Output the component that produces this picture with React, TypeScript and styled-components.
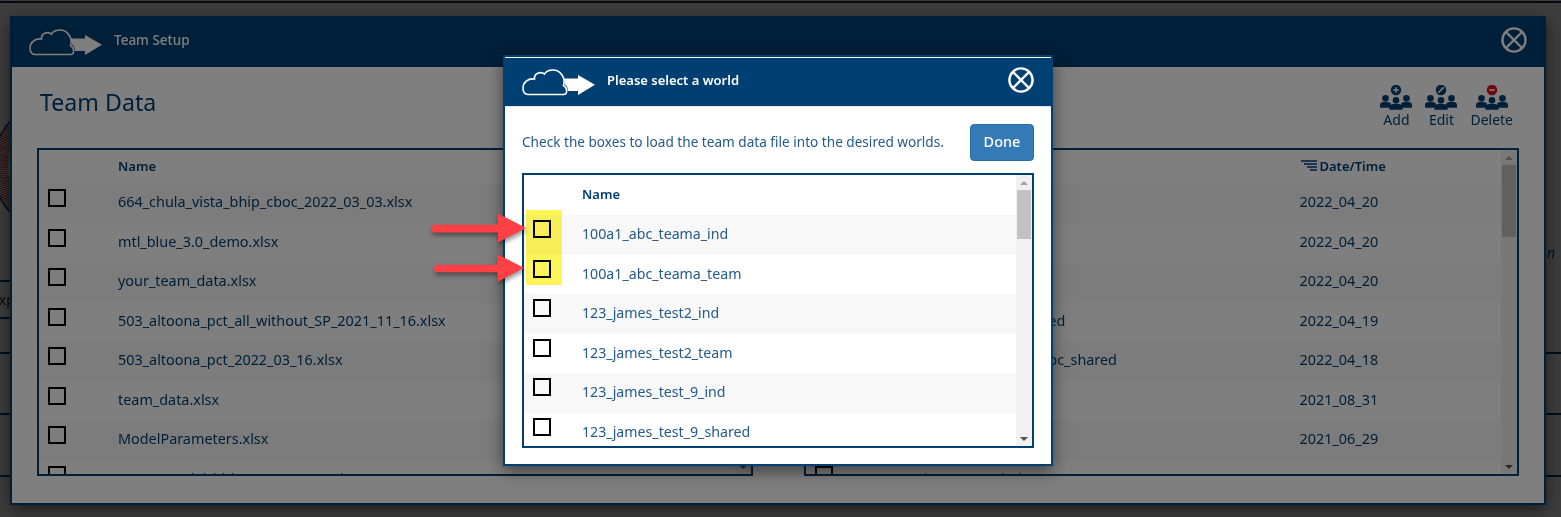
import React from 'react'
import styled, { createGlobalStyle } from 'styled-components'

const NAVY = '#003f72'
const FONT = '"Noto Sans", "Open Sans", Arial, sans-serif'

const teamRows = [
  { name: '664_chula_vista_bhip_cboc_2022_03_03.xlsx', date: '2022_04_20' },
  { name: 'mtl_blue_3.0_demo.xlsx', date: '2022_04_20' },
  { name: 'your_team_data.xlsx', date: '2022_04_20' },
  { name: '503_altoona_pct_all_without_SP_2021_11_16.xlsx', date: '2022_04_19' },
  { name: '503_altoona_pct_2022_03_16.xlsx', date: '2022_04_18' },
  { name: 'team_data.xlsx', date: '2021_08_31' },
  { name: 'ModelParameters.xlsx', date: '2021_06_29' },
  { name: '649_0_model_bhip_2022_03_24.xlsx', date: '2022_03_15' },
]

const rightRows = [
  { name: '', date: '2022_04_20' },
  { name: '', date: '2022_04_20' },
  { name: '', date: '2022_04_20' },
  { name: '503_altoona_pct_al_shared', date: '2022_04_19' },
  { name: '664_chula_vista_bhip_cboc_shared', date: '2022_04_18' },
  { name: '', date: '2021_08_31' },
  { name: '', date: '2021_06_29' },
  { name: '503_altoona_pct_ind', date: '2021_04_20' },
]

const worlds = [
  '100a1_abc_teama_ind',
  '100a1_abc_teama_team',
  '123_james_test2_ind',
  '123_james_test2_team',
  '123_james_test_9_ind',
  '123_james_test_9_shared',
]

const Logo = () => (
  <LogoSvg viewBox="0 0 74 27">
    <path
      d="M6 25.5H41.5C45.5 25.5 46 19 41.5 16.5C44 8.5 38 1 31 1C27 1 24 2.5 22.5 5C18.5 2 12 4.5 12.5 10C6 9 1 13.5 1 19C1 23 3 25.5 6 25.5Z"
      fill="none"
      stroke="currentColor"
      strokeWidth="1.6"
    />
    <path d="M41 9.5H56V6L73 15.7L56 26V22H46C46 19 45 17 43 15.5C43.5 13.5 42 11 41 9.5Z" fill="currentColor" />
  </LogoSvg>
)

const CloseIcon = () => (
  <CloseSvg viewBox="0 0 26 26">
    <circle cx="13" cy="13" r="11.6" fill="none" stroke="currentColor" strokeWidth="2.4" />
    <path d="M5 5L21 21M21 5L5 21" stroke="currentColor" strokeWidth="2.4" />
  </CloseSvg>
)

const Person = ({ x, y, $half }: { x: number; y: number; $half: number }) => (
  <g transform={`translate(${x} ${y})`}>
    <circle cx="0" cy="0" r="3.3" />
    <path d={`M${-$half} 9.6V7C${-$half} 4.8 -4 3.6 0 3.6C4 3.6 ${$half} 4.8 ${$half} 7V9.6Z`} />
  </g>
)

const TeamIcon = ({ kind }: { kind: 'add' | 'edit' | 'delete' }) => (
  <TeamSvg viewBox="0 0 32 26">
    <g fill={NAVY}>
      <Person x={5.5} y={13.2} $half={5.5} />
      <Person x={26.5} y={13.2} $half={5.5} />
      <Person x={16} y={15.2} $half={6.6} />
      <circle cx="16" cy="5" r="5.2" fill={kind === 'delete' ? '#e0101f' : NAVY} />
    </g>
    {kind === 'add' && <path d="M16 2.2V7.8M13.2 5H18.8" stroke="#fff" strokeWidth="1.5" />}
    {kind === 'edit' && <path d="M13.4 7.6L18.6 2.4" stroke="#fff" strokeWidth="1.5" />}
    {kind === 'delete' && <path d="M13.4 5H18.6" stroke="#fff" strokeWidth="1.6" />}
  </TeamSvg>
)

const SortIcon = () => (
  <SortSvg viewBox="0 0 16 11">
    <path d="M0 1H16M3 4H16M6 7H16M9 10H16" stroke={NAVY} strokeWidth="1.6" />
  </SortSvg>
)

const Arrow = () => (
  <ArrowSvg viewBox="0 0 100 36">
    <path d="M4 13.5H69V2L98 17L69 32V21.5H4A4 4 0 0 1 4 13.5Z" fill="#ff4045" />
  </ArrowSvg>
)

const Scroll = ({ $thumbHeight }: { $thumbHeight: number }) => (
  <ScrollTrack>
    <ScrollUp />
    <ScrollThumb $height={$thumbHeight} />
    <ScrollDown />
  </ScrollTrack>
)

export default function App() {
  return (
    <Page>
      <GlobalStyle />
      <Backdrop>
        <TopRule />
        <Chart viewBox="0 0 40 100">
          <circle cx="62" cy="49" r="61" fill="none" stroke="#b03030" strokeWidth="15" strokeDasharray="1 1" />
          <circle cx="62" cy="49" r="69" fill="none" stroke={NAVY} strokeWidth="1.5" />
        </Chart>
        <BackdropNote>n</BackdropNote>
        <BackdropRow $height={37} $short>
          <BackdropText>Exp</BackdropText>
        </BackdropRow>
        <BackdropRow $height={35} $short />
        <BackdropRow $height={61} />
        <BackdropRow $height={62} />
        <BackdropRow $height={20} />
      </Backdrop>
      <Scrim />
      <TeamWindow>
        <TeamHeader>
          <Logo />
          <TeamTitle>Team Setup</TeamTitle>
          <CloseIcon />
        </TeamHeader>
        <TeamBody>
          <TeamTop>
            <Heading>Team Data</Heading>
            <Tools>
              <Tool>
                <TeamIcon kind="add" />
                Add
              </Tool>
              <Tool>
                <TeamIcon kind="edit" />
                Edit
              </Tool>
              <Tool>
                <TeamIcon kind="delete" />
                Delete
              </Tool>
            </Tools>
          </TeamTop>
          <Tables>
            <Table>
              <Rows>
                <HeadRow>
                  <HeadName>Name</HeadName>
                </HeadRow>
                {teamRows.map((row) => (
                  <DataRow key={row.name}>
                    <CheckBox />
                    <NameCell $wide>{row.name}</NameCell>
                    <DateCell>{row.date}</DateCell>
                  </DataRow>
                ))}
              </Rows>
              <Scroll $thumbHeight={72} />
            </Table>
            <Table>
              <Rows>
                <HeadRow>
                  <HeadSpacer />
                  <HeadDate>
                    <SortIcon />
                    Date/Time
                  </HeadDate>
                </HeadRow>
                {rightRows.map((row, i) => (
                  <DataRow key={i}>
                    <CheckBox />
                    <NameCell>{row.name}</NameCell>
                    <DateCell>{row.date}</DateCell>
                  </DataRow>
                ))}
              </Rows>
              <Scroll $thumbHeight={72} />
            </Table>
          </Tables>
        </TeamBody>
      </TeamWindow>
      <Scrim />
      <Modal>
        <ModalHeader>
          <Logo />
          <ModalTitle>Please select a world</ModalTitle>
          <CloseIcon />
        </ModalHeader>
        <ModalBody>
          <Prompt>
            <PromptText>Check the boxes to load the team data file into the desired worlds.</PromptText>
            <DoneButton>Done</DoneButton>
          </Prompt>
          <WorldList>
            <Rows>
              <WorldHead>Name</WorldHead>
              {worlds.map((world) => (
                <WorldRow key={world}>
                  <CheckBox />
                  <WorldName>{world}</WorldName>
                </WorldRow>
              ))}
              <Highlight />
            </Rows>
            <Scroll $thumbHeight={49} />
          </WorldList>
        </ModalBody>
      </Modal>
      <FirstArrow>
        <Arrow />
      </FirstArrow>
      <SecondArrow>
        <Arrow />
      </SecondArrow>
    </Page>
  )
}

const GlobalStyle = createGlobalStyle`
  html, body {
    margin: 0;
    padding: 0;
    background: #fff;
    overflow: hidden;
  }
`

const Page = styled.div`
  position: relative;
  width: 1561px;
  height: 517px;
  overflow: hidden;
  font-family: ${FONT};
`

const Backdrop = styled.div`
  height: 517px;
  box-sizing: border-box;
  background: #f4f4f4;
  display: flex;
  flex-direction: column;
`

const TopRule = styled.div`
  flex: none;
  margin-top: 1px;
  height: 2px;
  background: #0f2a44;
`

const Chart = styled.svg`
  flex: none;
  margin-top: 115px;
  width: 40px;
  height: 100px;
`

const BackdropNote = styled.div`
  flex: none;
  margin: 25px 0 17px 1547px;
  height: 20px;
  line-height: 20px;
  font-size: 14px;
  font-style: italic;
  color: #003f72;
`

const BackdropRow = styled.div<{ $height: number; $short?: boolean }>`
  flex: none;
  height: ${(p) => p.$height}px;
  box-sizing: border-box;
  border-top: 2px solid #003f72;
  width: ${(p) => (p.$short ? '60px' : '100%')};
  display: flex;
  align-items: center;
`

const BackdropText = styled.span`
  margin-left: -9px;
  font-size: 14px;
  color: #222;
`

const Scrim = styled.div`
  position: absolute;
  inset: 0;
  background: rgba(0, 0, 0, 0.5);
`

const TeamWindow = styled.div`
  position: absolute;
  left: 10px;
  top: 16px;
  width: 1536px;
  height: 489px;
  box-sizing: border-box;
  border: 2px solid ${NAVY};
  border-top: 0;
  background: #fff;
  display: flex;
  flex-direction: column;
  box-shadow: 0 5px 15px rgba(0, 0, 0, 0.5);
`

const TeamHeader = styled.div`
  flex: none;
  height: 51px;
  margin: 0 -2px;
  padding: 11px 19px 0 19px;
  box-sizing: border-box;
  background: ${NAVY};
  color: #fff;
  display: flex;
  align-items: flex-start;
`

const LogoSvg = styled.svg`
  flex: none;
  width: 74px;
  height: 27px;
  margin-top: 2px;
  color: #fff;
`

const CloseSvg = styled.svg`
  flex: none;
  width: 26px;
  height: 26px;
  color: #fff;
`

const TeamTitle = styled.div`
  flex: 1;
  margin: 2px 0 0 11px;
  line-height: 22px;
  font-size: 13.5px;
  font-weight: 500;
`

const TeamBody = styled.div`
  flex: 1;
  min-height: 0;
  padding: 0 25px;
  display: flex;
  flex-direction: column;
`

const TeamTop = styled.div`
  flex: none;
  height: 81px;
  display: flex;
  justify-content: space-between;
  margin-left: 3px;
`

const Heading = styled.h1`
  margin: 19px 0 0;
  font-size: 23.2px;
  line-height: 32px;
  font-weight: 400;
  color: ${NAVY};
`

const Tools = styled.div`
  display: flex;
  gap: 13px;
  padding-top: 18px;
  padding-right: 6px;
`

const Tool = styled.div`
  display: flex;
  flex-direction: column;
  align-items: center;
  font-size: 14px;
  line-height: 18px;
  color: ${NAVY};
`

const TeamSvg = styled.svg`
  width: 32px;
  height: 26px;
`

const Tables = styled.div`
  display: flex;
  gap: 51px;
  height: 328px;
`

const Table = styled.div`
  flex: 1;
  min-width: 0;
  box-sizing: border-box;
  border: 2px solid ${NAVY};
  display: flex;
  overflow: hidden;
`

const Rows = styled.div`
  position: relative;
  flex: 1;
  min-width: 0;
  overflow: hidden;
`

const HeadRow = styled.div`
  height: 34px;
  display: flex;
  align-items: flex-start;
  font-size: 13px;
  font-weight: 600;
  line-height: 33px;
  color: ${NAVY};
`

const HeadName = styled.div`
  margin-left: 79px;
`

const HeadSpacer = styled.div`
  width: 495px;
`

const HeadDate = styled.div`
  display: flex;
  align-items: center;
  gap: 3px;
`

const SortSvg = styled.svg`
  width: 16px;
  height: 11px;
  margin-top: -3px;
`

const DataRow = styled.div`
  height: 39.5px;
  display: flex;
  padding: 5px 0 0 9px;
  box-sizing: border-box;
  font-size: 14.4px;
  color: ${NAVY};

  &:nth-child(even) {
    background: #f8f8f8;
  }
`

const CheckBox = styled.div`
  flex: none;
  width: 18px;
  height: 18px;
  box-sizing: border-box;
  border: 2px solid #000;
`

const NameCell = styled.div<{ $wide?: boolean }>`
  margin: 2px 0 0 52px;
  width: ${(p) => (p.$wide ? '418px' : '415px')};
  flex: none;
  line-height: 22px;
  white-space: nowrap;
`

const DateCell = styled.div`
  line-height: 22px;
  margin-top: 2px;
  white-space: nowrap;
`

const Modal = styled.div`
  position: absolute;
  left: 503px;
  top: 55px;
  width: 550px;
  height: 411px;
  box-sizing: border-box;
  border: 2px solid ${NAVY};
  background: #fff;
  display: flex;
  flex-direction: column;
  box-shadow: 0 5px 15px rgba(0, 0, 0, 0.5);
`

const ModalHeader = styled.div`
  flex: none;
  height: 50px;
  padding: 9px 17px 0 17px;
  box-sizing: border-box;
  background: ${NAVY};
  border-top: 1px solid #fff;
  border-bottom: 1px solid #e5e5e5;
  color: #fff;
  display: flex;
  align-items: flex-start;
`

const ModalTitle = styled.div`
  flex: 1;
  margin: 2px 0 0 11px;
  line-height: 22px;
  font-size: 13px;
  font-weight: 600;
`

const ModalBody = styled.div`
  flex: 1;
  min-height: 0;
  padding: 17px 17px 0;
  display: flex;
  flex-direction: column;
`

const Prompt = styled.div`
  height: 49px;
  display: flex;
  justify-content: space-between;
  align-items: flex-start;
`

const PromptText = styled.div`
  font-size: 13.6px;
  line-height: 35px;
  color: #245a8c;
`

const DoneButton = styled.div`
  width: 64px;
  height: 37px;
  box-sizing: border-box;
  border: 1px solid #2e6da4;
  border-radius: 4px;
  background: #337ab7;
  color: #fff;
  font-size: 14.5px;
  font-weight: 500;
  line-height: 33px;
  text-align: center;
`

const WorldList = styled.div`
  height: 275px;
  box-sizing: border-box;
  border: 2px solid ${NAVY};
  display: flex;
  overflow: hidden;
`

const WorldHead = styled.div`
  height: 40px;
  padding-left: 58px;
  font-size: 13px;
  font-weight: 600;
  line-height: 38px;
  color: ${NAVY};
`

const WorldRow = styled.div`
  height: 39.5px;
  display: flex;
  padding: 5px 0 0 9px;
  box-sizing: border-box;

  &:nth-child(even) {
    background: #f8f8f8;
  }
`

const WorldName = styled.div`
  margin-left: 31px;
  font-size: 14.2px;
  line-height: 27.5px;
  color: #245a8c;
`

const Highlight = styled.div`
  position: absolute;
  left: 2px;
  top: 35px;
  width: 36px;
  height: 75px;
  background: #fff55a;
  mix-blend-mode: multiply;
`

const ScrollTrack = styled.div`
  flex: none;
  width: 16px;
  background: #f1f1f1;
  display: flex;
  flex-direction: column;
`

const ScrollUp = styled.div`
  flex: none;
  height: 15px;
  position: relative;

  &::after {
    content: '';
    position: absolute;
    left: 4px;
    top: 6px;
    border: 4px solid transparent;
    border-top: 0;
    border-bottom: 4px solid #a3a3a3;
  }
`

const ScrollThumb = styled.div<{ $height: number }>`
  flex: none;
  margin: 0 1px;
  height: ${(p) => p.$height}px;
  background: #c1c1c1;
`

const ScrollDown = styled.div`
  margin-top: auto;
  flex: none;
  height: 15px;
  position: relative;

  &::after {
    content: '';
    position: absolute;
    left: 4px;
    top: 6px;
    border: 4px solid transparent;
    border-bottom: 0;
    border-top: 4px solid #505050;
  }
`

const ArrowSvg = styled.svg`
  display: block;
  width: 100%;
  height: 100%;
  overflow: visible;
  filter: drop-shadow(1px 3px 2px rgba(0, 0, 0, 0.4));
`

const FirstArrow = styled.div`
  position: absolute;
  left: 431px;
  top: 211px;
  width: 97px;
  height: 36px;
`

const SecondArrow = styled.div`
  position: absolute;
  left: 434px;
  top: 251px;
  width: 92px;
  height: 36px;
`
